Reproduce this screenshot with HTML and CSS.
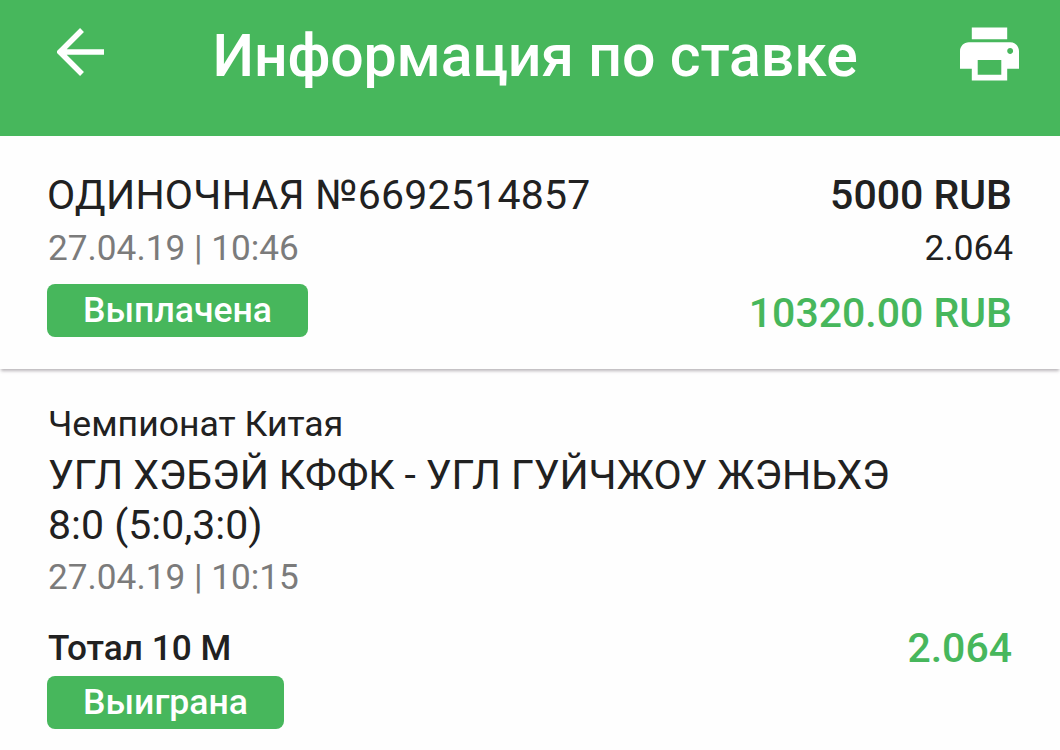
FILE: index.html
```html
<!DOCTYPE html>
<html lang="ru">
<head>
  <meta charset="UTF-8">
  <meta name="viewport" content="width=device-width, initial-scale=1.0">
  <title>Информация по ставке</title>
  <link rel="stylesheet" href="styles.css">
</head>
<body>
  <header>
    <svg class="back" viewBox="0 0 48 48"><path d="M47 24H4M25 2L3 24l22 22"/></svg>
    <h1>Информация по ставке</h1>
    <svg class="print" viewBox="2 3 20 18"><path d="M19 8H5c-1.66 0-3 1.34-3 3v6h4v4h12v-4h4v-6c0-1.66-1.34-3-3-3zm-3 11H8v-5h8v5zm3-7c-.55 0-1-.45-1-1s.45-1 1-1 1 .45 1 1-.45 1-1 1zm-1-9H6v4h12V3z"/></svg>
  </header>

  <section class="bet">
    <div class="row bet-number">
      <span class="number">ОДИНОЧНАЯ №6692514857</span>
      <span class="amount">5000 RUB</span>
    </div>
    <div class="row bet-date">
      <span class="date">27.04.19 | 10:46</span>
      <span class="odds">2.064</span>
    </div>
    <div class="row bet-status">
      <span class="badge paid">Выплачена</span>
      <span class="payout">10320.00 RUB</span>
    </div>
  </section>

  <section class="event">
    <div class="league">Чемпионат Китая</div>
    <div class="teams">УГЛ ХЭБЭЙ КФФК - УГЛ ГУЙЧЖОУ ЖЭНЬХЭ</div>
    <div class="score">8:0 (5:0,3:0)</div>
    <div class="date">27.04.19 | 10:15</div>
    <div class="row outcome">
      <span class="market">Тотал 10 М</span>
      <span class="coef">2.064</span>
    </div>
    <span class="badge won">Выиграна</span>
  </section>
</body>
</html>
```

FILE: styles.css
```css
* {
  box-sizing: border-box;
}
body {
  margin: 0;
  height: 750px;
  overflow: hidden;
  font-family: Roboto, sans-serif;
  color: #212121;
  background: #fefefe;
  white-space: nowrap;
}
header {
  display: flex;
  justify-content: space-between;
  height: 136px;
  padding: 0 41px 0 57px;
  background: #47b75c;
  color: #fff;
}
h1 {
  margin: 21px 0 0 5px;
  font-size: 59px;
  line-height: 70px;
  font-weight: 500;
  letter-spacing: -0.15px;
}
.back {
  width: 48px;
  height: 48px;
  margin-top: 28px;
  fill: none;
  stroke: #fff;
  stroke-width: 5.5;
}
.print {
  width: 59px;
  height: 54px;
  margin-top: 27px;
  fill: #fff;
}
.row {
  display: flex;
  justify-content: space-between;
  align-items: center;
}
.bet {
  height: 233px;
  padding: 34px 48px 0;
  background: #fefefe;
  box-shadow: 0 3px 3px -1px rgba(60, 50, 60, 0.35);
}
.bet-number {
  height: 50px;
}
.number, .amount, .payout, .coef {
  font-size: 41px;
}
.number {
  margin-left: -1px;
  letter-spacing: 0.25px;
}
.amount, .payout, .coef {
  font-weight: 500;
}
.bet-date {
  height: 55px;
}
.date, .odds, .market {
  font-size: 35.2px;
}
.league {
  font-size: 35.6px;
}
.odds {
  margin-right: -1px;
}
.date {
  color: #7b7b7b;
}
.bet-status {
  height: 70px;
}
.payout, .coef {
  color: #47b75c;
}
.payout {
  padding-top: 6px;
}
.badge {
  display: block;
  height: 53px;
  margin-left: -1px;
  border-radius: 8px;
  background: #47b75c;
  color: #fff;
  font-size: 35.6px;
  font-weight: 500;
  line-height: 53px;
  text-align: center;
}
.paid {
  width: 261px;
}
.event {
  padding: 30px 48px 0;
}
.league {
  line-height: 50px;
}
.teams, .score {
  font-size: 41px;
  line-height: 50px;
}
.teams {
  padding-top: 1px;
  letter-spacing: -0.1px;
}
.event .date {
  line-height: 54px;
}
.outcome {
  height: 72px;
  padding-top: 16px;
}
.market {
  font-weight: 500;
}
.won {
  width: 237px;
}
```
